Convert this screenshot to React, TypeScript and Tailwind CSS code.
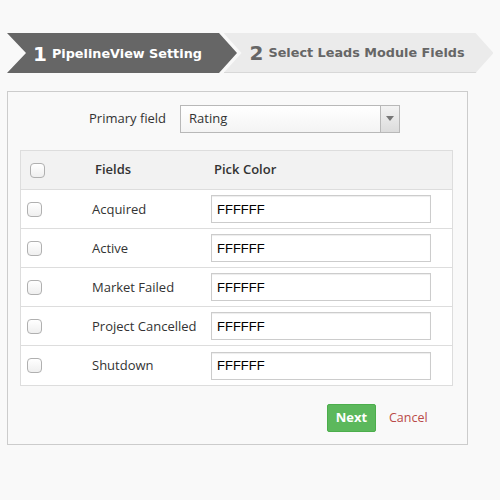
import React from 'react';

const fields = ['Acquired', 'Active', 'Market Failed', 'Project Cancelled', 'Shutdown'];

const Checkbox = () => (
  <span className="block w-[15px] h-[15px] rounded-[4px] border border-[#b0b0b0] bg-gradient-to-b from-white to-[#efefef]"></span>
);

const App: React.FC = () => {
  return (
    <div className="w-[500px] h-[500px] bg-[#f9f9f9] pt-[33px] font-['Open_Sans',sans-serif] text-[13px] text-[#333]">
      {/* Wizard steps */}
      <div className="flex px-[7px] font-['DejaVu_Sans',sans-serif]">
        <div className="w-[230px] h-[40px] bg-[#666666] flex items-center pt-[1px] pl-[26px] text-white font-bold [clip-path:polygon(0_0,212px_0,230px_50%,212px_100%,0_100%,19px_50%)]">
          <span className="text-[20px] leading-none mr-[5px]">1</span>
          <span className="text-[12.8px]">PipelineView Setting</span>
        </div>
        <div className="ml-[-13px] w-[270px] h-[40px] bg-[#ebebeb] border-b border-[#d8d8d8] flex items-center pt-[1px] pl-[26px] text-[#666] font-bold [clip-path:polygon(0_0,252px_0,270px_50%,252px_100%,0_100%,18px_50%)]">
          <span className="text-[20px] leading-none mr-[5px]">2</span>
          <span className="text-[12.8px]">Select Leads Module Fields</span>
        </div>
      </div>

      {/* Panel */}
      <div className="mx-[7px] mt-[18px] w-[461px] border border-[#cccccc] bg-[#f9f9f9] pt-[12px] pb-[12px] pl-[12px] pr-[14px]">
        <div className="flex items-center h-[28px] pt-[1px]">
          <label className="ml-[69px] w-[91px]">Primary field</label>
          <div className="w-[220px] h-[28px] flex border border-[#b8b8b8] bg-white">
            <div className="flex-1 flex items-center pl-[8px] bg-gradient-to-b from-white to-[#f4f4f4]">Rating</div>
            <div className="w-[19px] flex items-center justify-center border-l border-[#b8b8b8] bg-gradient-to-b from-[#f3f3f3] to-[#dcdcdc]">
              <span className="w-0 h-0 border-l-[4px] border-r-[4px] border-t-[5px] border-l-transparent border-r-transparent border-t-[#777]"></span>
            </div>
          </div>
        </div>

        <div className="mt-[18px] w-[433px] border border-[#dddddd] bg-white">
          <div className="flex items-center h-[39px] bg-[#f2f2f2] border-b border-[#dddddd] font-semibold">
            <div className="w-[74px] pl-[9px]"><Checkbox /></div>
            <div className="w-[119px]">Fields</div>
            <div>Pick Color</div>
          </div>
          {fields.map((f, i) => (
            <div key={f} className={`flex items-center h-[39px] ${i < fields.length - 1 ? 'border-b border-[#dddddd]' : ''}`}>
              <div className="w-[71px] pl-[6px]"><Checkbox /></div>
              <div className="w-[119px] pt-[1px]">{f}</div>
              <input
                readOnly
                value="FFFFFF"
                className="w-[220px] h-[28px] border border-[#cccccc] shadow-[inset_0_1px_1px_rgba(0,0,0,0.075)] bg-white px-[5px] font-['Liberation_Sans',Arial,sans-serif] text-[13px] text-black outline-none"
              />
            </div>
          ))}
        </div>

        <div className="flex items-center justify-end mt-[18px] pr-[27px]">
          <button className="w-[49px] h-[28px] rounded-[2px] bg-[#5cb85c] border border-[#4cae4c] text-white font-bold text-[13px]">Next</button>
          <a className="ml-[13px] w-[37px] text-[12.5px] text-[#b94a48]">Cancel</a>
        </div>
      </div>
    </div>
  );
};

export default App;
